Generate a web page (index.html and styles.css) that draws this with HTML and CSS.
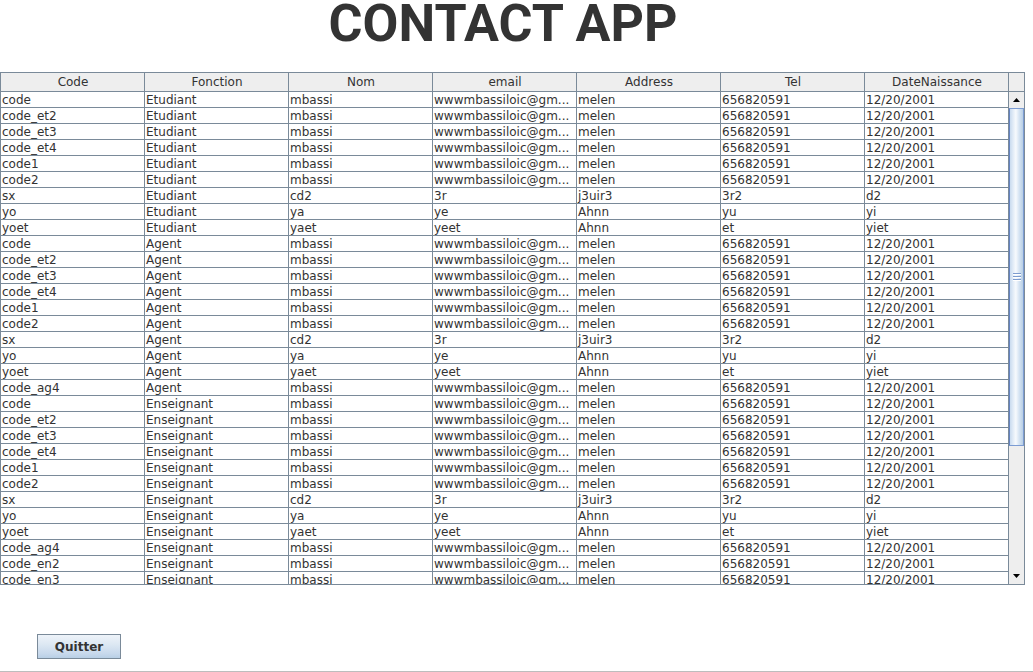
FILE: index.html
```html
<!DOCTYPE html>
<html lang="fr">
<head>
<meta charset="utf-8">
<title>Contact App</title>
<link rel="stylesheet" href="styles.css">
</head>
<body>
<header class="title-bar"><h1 class="title">CONTACT APP</h1></header>
<div class="frame">
  <table class="grid head">
    <colgroup><col class="c1"><col><col><col><col><col><col></colgroup>
    <thead><tr><th>Code</th><th>Fonction</th><th>Nom</th><th>email</th><th>Address</th><th>Tel</th><th>DateNaissance</th></tr></thead>
  </table>
  <div class="corner"></div>
  <div class="viewport">
  <table class="grid body">
    <colgroup><col class="c1"><col><col><col><col><col><col></colgroup>
    <tbody>
<tr><td>code</td><td>Etudiant</td><td>mbassi</td><td>wwwmbassiloic@gm...</td><td>melen</td><td>656820591</td><td>12/20/2001</td></tr>
<tr><td>code_et2</td><td>Etudiant</td><td>mbassi</td><td>wwwmbassiloic@gm...</td><td>melen</td><td>656820591</td><td>12/20/2001</td></tr>
<tr><td>code_et3</td><td>Etudiant</td><td>mbassi</td><td>wwwmbassiloic@gm...</td><td>melen</td><td>656820591</td><td>12/20/2001</td></tr>
<tr><td>code_et4</td><td>Etudiant</td><td>mbassi</td><td>wwwmbassiloic@gm...</td><td>melen</td><td>656820591</td><td>12/20/2001</td></tr>
<tr><td>code1</td><td>Etudiant</td><td>mbassi</td><td>wwwmbassiloic@gm...</td><td>melen</td><td>656820591</td><td>12/20/2001</td></tr>
<tr><td>code2</td><td>Etudiant</td><td>mbassi</td><td>wwwmbassiloic@gm...</td><td>melen</td><td>656820591</td><td>12/20/2001</td></tr>
<tr><td>sx</td><td>Etudiant</td><td>cd2</td><td>3r</td><td>j3uir3</td><td>3r2</td><td>d2</td></tr>
<tr><td>yo</td><td>Etudiant</td><td>ya</td><td>ye</td><td>Ahnn</td><td>yu</td><td>yi</td></tr>
<tr><td>yoet</td><td>Etudiant</td><td>yaet</td><td>yeet</td><td>Ahnn</td><td>et</td><td>yiet</td></tr>
<tr><td>code</td><td>Agent</td><td>mbassi</td><td>wwwmbassiloic@gm...</td><td>melen</td><td>656820591</td><td>12/20/2001</td></tr>
<tr><td>code_et2</td><td>Agent</td><td>mbassi</td><td>wwwmbassiloic@gm...</td><td>melen</td><td>656820591</td><td>12/20/2001</td></tr>
<tr><td>code_et3</td><td>Agent</td><td>mbassi</td><td>wwwmbassiloic@gm...</td><td>melen</td><td>656820591</td><td>12/20/2001</td></tr>
<tr><td>code_et4</td><td>Agent</td><td>mbassi</td><td>wwwmbassiloic@gm...</td><td>melen</td><td>656820591</td><td>12/20/2001</td></tr>
<tr><td>code1</td><td>Agent</td><td>mbassi</td><td>wwwmbassiloic@gm...</td><td>melen</td><td>656820591</td><td>12/20/2001</td></tr>
<tr><td>code2</td><td>Agent</td><td>mbassi</td><td>wwwmbassiloic@gm...</td><td>melen</td><td>656820591</td><td>12/20/2001</td></tr>
<tr><td>sx</td><td>Agent</td><td>cd2</td><td>3r</td><td>j3uir3</td><td>3r2</td><td>d2</td></tr>
<tr><td>yo</td><td>Agent</td><td>ya</td><td>ye</td><td>Ahnn</td><td>yu</td><td>yi</td></tr>
<tr><td>yoet</td><td>Agent</td><td>yaet</td><td>yeet</td><td>Ahnn</td><td>et</td><td>yiet</td></tr>
<tr><td>code_ag4</td><td>Agent</td><td>mbassi</td><td>wwwmbassiloic@gm...</td><td>melen</td><td>656820591</td><td>12/20/2001</td></tr>
<tr><td>code</td><td>Enseignant</td><td>mbassi</td><td>wwwmbassiloic@gm...</td><td>melen</td><td>656820591</td><td>12/20/2001</td></tr>
<tr><td>code_et2</td><td>Enseignant</td><td>mbassi</td><td>wwwmbassiloic@gm...</td><td>melen</td><td>656820591</td><td>12/20/2001</td></tr>
<tr><td>code_et3</td><td>Enseignant</td><td>mbassi</td><td>wwwmbassiloic@gm...</td><td>melen</td><td>656820591</td><td>12/20/2001</td></tr>
<tr><td>code_et4</td><td>Enseignant</td><td>mbassi</td><td>wwwmbassiloic@gm...</td><td>melen</td><td>656820591</td><td>12/20/2001</td></tr>
<tr><td>code1</td><td>Enseignant</td><td>mbassi</td><td>wwwmbassiloic@gm...</td><td>melen</td><td>656820591</td><td>12/20/2001</td></tr>
<tr><td>code2</td><td>Enseignant</td><td>mbassi</td><td>wwwmbassiloic@gm...</td><td>melen</td><td>656820591</td><td>12/20/2001</td></tr>
<tr><td>sx</td><td>Enseignant</td><td>cd2</td><td>3r</td><td>j3uir3</td><td>3r2</td><td>d2</td></tr>
<tr><td>yo</td><td>Enseignant</td><td>ya</td><td>ye</td><td>Ahnn</td><td>yu</td><td>yi</td></tr>
<tr><td>yoet</td><td>Enseignant</td><td>yaet</td><td>yeet</td><td>Ahnn</td><td>et</td><td>yiet</td></tr>
<tr><td>code_ag4</td><td>Enseignant</td><td>mbassi</td><td>wwwmbassiloic@gm...</td><td>melen</td><td>656820591</td><td>12/20/2001</td></tr>
<tr><td>code_en2</td><td>Enseignant</td><td>mbassi</td><td>wwwmbassiloic@gm...</td><td>melen</td><td>656820591</td><td>12/20/2001</td></tr>
<tr><td>code_en3</td><td>Enseignant</td><td>mbassi</td><td>wwwmbassiloic@gm...</td><td>melen</td><td>656820591</td><td>12/20/2001</td></tr>
    </tbody>
  </table>
  </div>
  <div class="scrollbar">
    <div class="sb-btn"><svg width="7" height="4" viewBox="0 0 7 4"><path d="M0 4 L3.5 0 L7 4 Z" fill="#000"/></svg></div>
    <div class="thumb"><span class="grip"></span><span class="grip"></span><span class="grip"></span></div>
    <div class="track"></div>
    <div class="sb-btn"><svg width="7" height="4" viewBox="0 0 7 4"><path d="M0 0 L3.5 4 L7 0 Z" fill="#000"/></svg></div>
  </div>
</div>
<div class="actions"><button class="btn">Quitter</button></div>
<div class="bottom-line"></div>
</body>
</html>
```

FILE: styles.css
```css
html, body {
  margin: 0;
  padding: 0;
  background: #fff;
}
body {
  width: 1033px;
  height: 672px;
  display: flex;
  flex-direction: column;
  font-family: "DejaVu Sans", sans-serif;
  color: #333;
  overflow: hidden;
}
.title-bar {
  height: 72px;
  flex: none;
  display: flex;
  justify-content: center;
}
.title {
  margin: 0 0 0 -27px;
  font-family: Roboto, "Liberation Sans", sans-serif;
  font-weight: 700;
  font-size: 52px;
  line-height: 48px;
  color: #333;
}
.frame {
  box-sizing: border-box;
  width: 1025px;
  height: 513px;
  flex: none;
  border: 1px solid #7a8a99;
  display: grid;
  grid-template-columns: 1008px 15px;
  grid-template-rows: 19px 492px;
}
.grid {
  width: 1008px;
  table-layout: fixed;
  border-collapse: separate;
  border-spacing: 0;
  font-size: 12px;
  color: #333;
}
.grid col { width: 144px; }
.grid th, .grid td {
  padding: 1px 0 0 1px;
  border-right: 1px solid #7a8a99;
  border-bottom: 1px solid #7a8a99;
  white-space: nowrap;
  overflow: hidden;
  font-weight: 400;
}
.head th {
  background: #eeeeee;
  text-align: center;
  line-height: 17px;
}
.body td {
  text-align: left;
  line-height: 14px;
}
.corner {
  background: #eeeeee;
  border-bottom: 1px solid #7a8a99;
}
.viewport {
  overflow: hidden;
}
.scrollbar {
  display: flex;
  flex-direction: column;
  background: #eeeeee;
}
.sb-btn {
  height: 16px;
  flex: none;
  display: flex;
  align-items: center;
  justify-content: center;
  background: #eeeeee;
}
.thumb {
  box-sizing: border-box;
  height: 338px;
  flex: none;
  border: 1px solid #7c9cd3;
  border-left-color: #6382bf;
  background: linear-gradient(to right, #c9dbef 0%, #e8f0f9 30%, #f7fafd 45%, #d6e4f3 70%, #b8cfe5 100%);
  display: flex;
  flex-direction: column;
  align-items: center;
  justify-content: center;
  gap: 1px;
}
.grip {
  width: 8px;
  height: 1px;
  background: #7d9ccf;
  box-shadow: 0 1px 0 #fff;
  margin-bottom: 1px;
}
.track {
  flex: 1;
  background: #eeeeee;
}
.actions {
  flex: none;
  padding: 49px 0 0 37px;
}
.btn {
  box-sizing: border-box;
  width: 84px;
  height: 25px;
  border: 1px solid #7a8a99;
  background: linear-gradient(to bottom, #eef3f9 0%, #dde8f3 40%, #c8d9ec 80%, #b8cfe5 100%);
  font-family: "DejaVu Sans", sans-serif;
  font-weight: 700;
  font-size: 12px;
  color: #333;
  padding: 0;
}
.bottom-line {
  margin-top: auto;
  height: 1px;
  flex: none;
  background: #bdbdbd;
}
```
